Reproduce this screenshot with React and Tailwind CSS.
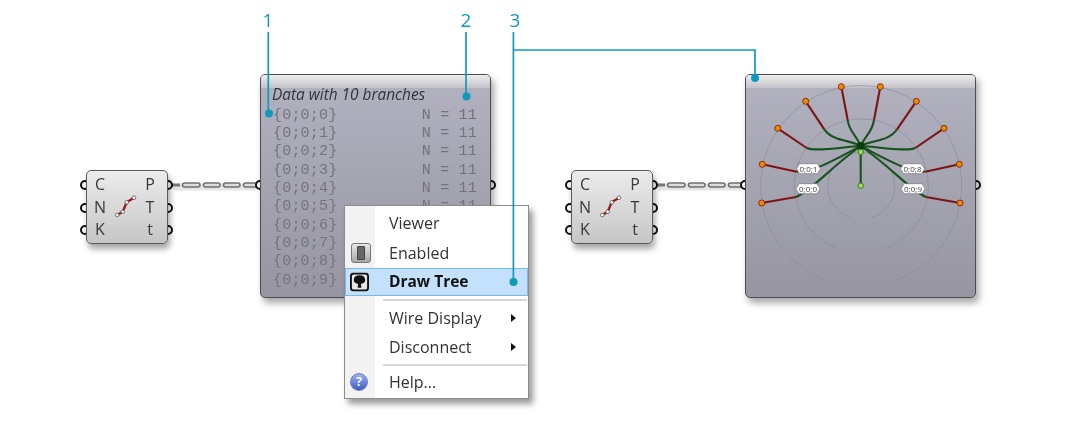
import React from 'react';

const sans = "font-['Open_Sans',sans-serif]";

const branches = ['{0;0;0}', '{0;0;1}', '{0;0;2}', '{0;0;3}', '{0;0;4}', '{0;0;5}', '{0;0;6}', '{0;0;7}', '{0;0;8}', '{0;0;9}'];

// red segment tip -> knee, then a curved green run into the hub
const treeLines = [
  { tip: [841.3, 86.7], knee: [847.7, 120], ctrl: [849, 132, 856, 134] },
  { tip: [880.3, 86.7], knee: [874, 120], ctrl: [872.5, 132, 865, 136] },
  { tip: [805.7, 101.3], knee: [824.3, 129.3], ctrl: [833, 142, 852, 140] },
  { tip: [916.3, 101.3], knee: [897, 129.3], ctrl: [889, 142, 870, 140] },
  { tip: [777.7, 128.3], knee: [806.7, 148], ctrl: [816, 152, 842, 147] },
  { tip: [944, 128.3], knee: [915.3, 148], ctrl: [906, 152, 880, 147] },
  { tip: [762.3, 164.3], knee: [796.7, 171.7], ctrl: [815, 172, 838, 158] },
  { tip: [959.3, 164.3], knee: [925.3, 171.7], ctrl: [907, 172, 884, 158] },
  { tip: [761.7, 203], knee: [796, 197], ctrl: [812, 190, 830, 168] },
  { tip: [960, 203], knee: [926, 197], ctrl: [910, 190, 892, 168] },
];

const pathLabels = [
  { text: '0;0;1', x: 808.5, y: 168.7 },
  { text: '0;0;0', x: 808, y: 188.7 },
  { text: '0;0;8', x: 912.5, y: 168.7 },
  { text: '0;0;9', x: 913, y: 188.7 },
];

const wireSegments = 'M14.5 6 H28 M35.5 6 H48 M55.5 6 H68 M75.5 6 H86';

function Socket() {
  return <div className="w-[10px] h-[10px] rounded-full bg-white border-[2.5px] border-[#111]" />;
}

function SocketColumn() {
  return (
    <div className="flex flex-col gap-[12.5px] pt-[10px]">
      <Socket />
      <Socket />
      <Socket />
    </div>
  );
}

function Capsule({ className }) {
  const inputs = ['C', 'N', 'K'];
  const outputs = ['P', 'T', 't'];
  return (
    <div className={`absolute w-[93px] h-[74px] flex justify-between ${className}`}>
      <SocketColumn />
      <SocketColumn />
      <div className={`absolute left-[6px] top-0 w-[82px] h-[74px] rounded-[5px] border border-[#5a5a5a] bg-gradient-to-b from-[#ececec] to-[#c6c6c6] shadow-[2px_5px_6px_rgba(0,0,0,0.35)] flex justify-between pl-[3px] pr-[7px] pt-[2px] text-[16px] leading-[22.5px] text-[#383838] ${sans}`}>
        <div className="flex flex-col items-center w-[20px]">
          {inputs.map(l => <span key={l}>{l}</span>)}
        </div>
        <svg width="24" height="24" viewBox="0 0 24 24" className="absolute left-[28px] top-[24px]">
          <path d="M2.3 20 L7.7 16.7 L11.7 7.3 L19 2.7" fill="none" stroke="#a11a1a" strokeWidth="2.4" />
          {[[2.3, 20], [7.7, 16.7], [11.7, 7.3], [19, 2.7]].map(([cx, cy]) => (
            <circle key={cx} cx={cx} cy={cy} r="1.8" fill="#fff" stroke="#555" strokeWidth="0.8" />
          ))}
        </svg>
        <div className="flex flex-col items-center w-[20px]">
          {outputs.map(l => <span key={l}>{l}</span>)}
        </div>
      </div>
    </div>
  );
}

function Wire({ className }) {
  return (
    <svg width="90" height="14" viewBox="0 0 90 14" className={`absolute top-[179px] ${className}`}>
      <path d="M3 8 H86" fill="none" stroke="#000" strokeOpacity="0.1" strokeWidth="7" />
      <path d={wireSegments} fill="none" stroke="#6f6f6f" strokeWidth="5.5" strokeLinecap="round" />
      <path d={wireSegments} fill="none" stroke="#dcdcdc" strokeWidth="2.4" strokeLinecap="round" />
      <path d="M1 6 H10" fill="none" stroke="#777" strokeWidth="3" />
    </svg>
  );
}

function PanelShell({ className, children }) {
  return (
    <div className={`absolute w-[241px] h-[224px] flex justify-between pt-[106px] ${className}`}>
      <Socket />
      <Socket />
      <div className="absolute left-[5px] top-0 w-[231px] h-[224px] rounded-[5px] border border-[#4d4d4d] bg-gradient-to-b from-[#b3b2c0] to-[#9695a1] shadow-[3px_5px_7px_rgba(0,0,0,0.35)] overflow-hidden">
        <div className="h-[13px] bg-gradient-to-b from-[#eeeef0] to-[#c2c2c8]" />
        {children}
      </div>
    </div>
  );
}

function MenuItem({ label, selected, arrow, icon, h }) {
  return (
    <div className={`relative flex items-center pl-[43px] ${h} ${selected ? 'bg-[#c3e0fd] border border-[#79b8f5] font-bold text-[15.5px] text-[#111]' : 'text-[16px] text-[#333] border border-transparent'}`}>
      {icon && <div className="absolute left-[1px] top-1/2 -translate-y-1/2 w-[24px] flex justify-center">{icon}</div>}
      {label}
      {arrow && <div className="absolute right-[11px] top-1/2 -translate-y-1/2 border-y-[4px] border-y-transparent border-l-[5px] border-l-[#111]" />}
    </div>
  );
}

function Separator() {
  return <div className="h-[8px] flex items-center pl-[38px] pr-[1px]"><div className="h-[2px] w-full bg-[#d8d8d8]" /></div>;
}

function ContextMenu() {
  const switchIcon = (
    <div className="ml-[3px] w-[20px] h-[20px] rounded-[3px] border border-[#777] bg-gradient-to-b from-[#e8e8e8] to-[#a8a8a8] flex items-center justify-center">
      <div className="w-[8px] h-[14px] bg-[#666] rounded-[1px] border border-[#444]" />
    </div>
  );
  const treeIcon = (
    <svg width="19" height="19" viewBox="0 0 20 20">
      <rect x="1" y="1" width="18" height="18" rx="3" fill="#e6e6e6" stroke="#111" strokeWidth="2" />
      <path d="M10 3 C14 3 16 5 16 8 C16 11 13 12 11.5 12 L12 16 H8 L8.5 12 C7 12 4 11 4 8 C4 5 6 3 10 3 Z" fill="#111" />
    </svg>
  );
  const helpIcon = (
    <div className="w-[18px] h-[18px] rounded-full bg-gradient-to-b from-[#9fb2ee] to-[#3c5cc4] border border-[#6a7fc5] flex items-center justify-center text-white text-[13px] font-bold leading-none">?</div>
  );
  return (
    <div className={`absolute left-[344px] top-[205px] w-[185px] h-[194px] bg-white border border-[#8c8c8c] shadow-[4px_5px_6px_rgba(0,0,0,0.4)] pt-[2px] ${sans}`}>
      <div className="absolute left-0 top-0 bottom-0 w-[30px] bg-[#f3f3f3]" />
      <div className="relative">
        <MenuItem label="Viewer" h="h-[30px]" />
        <MenuItem label="Enabled" h="h-[30px]" icon={switchIcon} />
        <MenuItem label="Draw Tree" h="h-[28px]" selected icon={treeIcon} />
        <Separator />
        <MenuItem label="Wire Display" h="h-[28px]" arrow />
        <MenuItem label="Disconnect" h="h-[29px]" arrow />
        <Separator />
        <MenuItem label="Help..." h="h-[25px]" icon={helpIcon} />
      </div>
    </div>
  );
}

function TreeDrawing() {
  return (
    <svg width="1080" height="427" viewBox="0 0 1080 427" className="absolute left-0 top-0">
      <g fill="none" stroke="#8d8c98" strokeWidth="0.7">
        <path d="M850.7 217.7 A33.5 33.5 0 1 1 871.7 217.7" />
        <path d="M838.7 249 A67 67 0 1 1 884 249" />
        <path d="M827.3 280.7 A100.5 100.5 0 1 1 895 280.7" />
      </g>
      {treeLines.map(({ tip, knee, ctrl }) => (
        <g key={tip[0]} fill="none" strokeWidth="2.1">
          <path d={`M${tip[0]} ${tip[1]} L${knee[0]} ${knee[1]}`} stroke="#7d1414" />
          <path d={`M${knee[0]} ${knee[1]} C${ctrl[0]} ${ctrl[1]} ${ctrl[2]} ${ctrl[3]} 860.7 146`} stroke="#17531d" />
          <circle cx={tip[0]} cy={tip[1]} r="3" fill="#f08a00" stroke="#8c2a16" strokeWidth="1" />
        </g>
      ))}
      <path d="M860.7 146 V185.7" fill="none" stroke="#17531d" strokeWidth="2.1" />
      <circle cx="860.7" cy="146" r="4" fill="#0b3d10" />
      <circle cx="860.7" cy="152" r="2.7" fill="#9be34a" stroke="#2f7a24" strokeWidth="1" />
      <circle cx="860.7" cy="185.7" r="2.7" fill="#9be34a" stroke="#2f7a24" strokeWidth="1" />
      {pathLabels.map(({ text, x, y }) => (
        <g key={text}>
          <path
            d={`M${x - 12} ${y} L${x - 9} ${y - 5} H${x + 9} L${x + 12} ${y} L${x + 9} ${y + 5} H${x - 9} Z`}
            fill="#fff"
            stroke="#77767f"
            strokeWidth="0.7"
          />
          <text x={x} y={y + 2.8} textAnchor="middle" fontSize="8" fill="#444">{text}</text>
        </g>
      ))}
    </svg>
  );
}

function Annotations() {
  const blue = '#0f9abd';
  return (
    <svg width="1080" height="427" viewBox="0 0 1080 427" className="absolute left-0 top-0">
      <g fill="none" stroke={blue} strokeWidth="1.7">
        <path d="M268.3 32 V113" />
        <path d="M466 32 V96" />
        <path d="M513.4 32 V282" />
        <path d="M513.4 50 H755 V78" />
      </g>
      <g fill={blue}>
        <circle cx="269" cy="113.5" r="4" />
        <circle cx="466.5" cy="96.5" r="4" />
        <circle cx="513.5" cy="282" r="4" />
        <circle cx="755" cy="78" r="4" />
      </g>
    </svg>
  );
}

export default function App() {
  return (
    <div className={`relative w-[1080px] h-[427px] bg-white overflow-hidden blur-[0.35px] ${sans}`}>
      <Wire className="left-[170px]" />
      <Wire className="left-[655px]" />
      <Capsule className="left-[80px] top-[170px]" />
      <Capsule className="left-[565px] top-[170px]" />

      {/* data panel */}
      <PanelShell className="left-[255px] top-[74px]">
        <div className="pl-[11px] text-[15.4px] leading-[20px] italic text-[#333339] -mt-[3px]">Data with 10 branches</div>
        <div className="flex flex-col font-['Liberation_Mono',monospace] text-[15px] leading-[18.35px] tracking-[0.2px] text-[#74737d] pl-[12px] pr-[13px] pt-[1.5px]">
          {branches.map((b, i) => (
            <div key={b} className="flex justify-between">
              <span>{b}</span>
              {/* the rest of the column sits under the context menu */}
              {i < 6 && <span>N = 11</span>}
            </div>
          ))}
        </div>
      </PanelShell>

      {/* tree panel */}
      <PanelShell className="left-[740px] top-[74px]" />
      <TreeDrawing />

      <ContextMenu />
      <Annotations />
      <div className="absolute left-[262.5px] top-[9px] text-[19px] leading-[23px] text-[#0f9abd]">1</div>
      <div className="absolute left-[460.5px] top-[9px] text-[19px] leading-[23px] text-[#0f9abd]">2</div>
      <div className="absolute left-[509.5px] top-[9px] text-[19px] leading-[23px] text-[#0f9abd]">3</div>
    </div>
  );
}
